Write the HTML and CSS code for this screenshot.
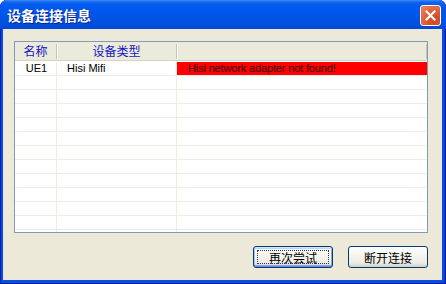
FILE: index.html
```html
<!DOCTYPE html>
<html lang="zh-CN">
<head>
  <meta charset="UTF-8" />
  <title>设备连接信息</title>
  <link rel="stylesheet" href="styles.css">
</head>
<body>
  <div class="window">
    <div class="titlebar">
      <span class="title">设备连接信息</span>
      <button class="close-btn">
        <svg width="11" height="11" viewBox="0 0 11 11">
          <path d="M1.5 1.5 L9.5 9.5 M9.5 1.5 L1.5 9.5" stroke="#fff" stroke-width="2.2" stroke-linecap="square"/>
        </svg>
      </button>
    </div>

    <div class="panel">
      <div class="listview">
        <div class="list-row list-head">
          <div class="cell c-name">名称</div>
          <div class="cell c-type">设备类型</div>
          <div class="cell c-msg"></div>
        </div>
        <div class="list-row">
          <div class="cell c-name">UE1</div>
          <div class="cell c-type">Hisi Mifi</div>
          <div class="cell c-msg error">Hisi network adapter not found!</div>
        </div>
        <div class="list-row"><div class="cell c-name"></div><div class="cell c-type"></div><div class="cell c-msg"></div></div>
        <div class="list-row"><div class="cell c-name"></div><div class="cell c-type"></div><div class="cell c-msg"></div></div>
        <div class="list-row"><div class="cell c-name"></div><div class="cell c-type"></div><div class="cell c-msg"></div></div>
        <div class="list-row"><div class="cell c-name"></div><div class="cell c-type"></div><div class="cell c-msg"></div></div>
        <div class="list-row"><div class="cell c-name"></div><div class="cell c-type"></div><div class="cell c-msg"></div></div>
        <div class="list-row"><div class="cell c-name"></div><div class="cell c-type"></div><div class="cell c-msg"></div></div>
        <div class="list-row"><div class="cell c-name"></div><div class="cell c-type"></div><div class="cell c-msg"></div></div>
        <div class="list-row"><div class="cell c-name"></div><div class="cell c-type"></div><div class="cell c-msg"></div></div>
        <div class="list-row"><div class="cell c-name"></div><div class="cell c-type"></div><div class="cell c-msg"></div></div>
        <div class="list-row"><div class="cell c-name"></div><div class="cell c-type"></div><div class="cell c-msg"></div></div>
        <div class="list-row"><div class="cell c-name"></div><div class="cell c-type"></div><div class="cell c-msg"></div></div>
        <div class="list-row"><div class="cell c-name"></div><div class="cell c-type"></div><div class="cell c-msg"></div></div>
      </div>

      <div class="actions">
        <button class="btn btn-default"><span>再次尝试</span></button>
        <button class="btn"><span>断开连接</span></button>
      </div>
    </div>
  </div>
</body>
</html>
```

FILE: styles.css
```css
body {
  margin: 0;
  width: 446px;
  height: 284px;
  overflow: hidden;
  background: #ffffff;
  font-family: "Liberation Sans", "Noto Sans CJK SC", sans-serif;
}

.window {
  width: 446px;
  height: 284px;
  box-sizing: border-box;
  display: flex;
  flex-direction: column;
  border-radius: 7px 7px 0 0;
  background: linear-gradient(90deg, #0a3fd6 0, #0a4ee0 3px, #0a4ee0 calc(100% - 4px), #0a3ad0 100%);
  box-shadow: inset 1px 0 #0021b0, inset -1px 0 #001c9c, inset 0 -1px #001c9c;
  overflow: hidden;
}

.titlebar {
  height: 29px;
  flex: none;
  display: flex;
  align-items: center;
  justify-content: space-between;
  padding: 0 5px 0 7px;
  border-radius: 7px 7px 0 0;
  background: linear-gradient(#3a8cf8 0, #1466ee 2px, #0a5cf0 4px, #0058ee 8px, #0055e8 16px, #0050de 24px, #0047d4 29px);
}

.title {
  color: #ffffff;
  font-family: "Noto Sans CJK SC", sans-serif;
  font-size: 14px;
  font-weight: bold;
  text-shadow: 1px 1px #0a1e8c;
  margin-top: 1px;
}

.close-btn {
  width: 21px;
  height: 21px;
  margin-top: 2px;
  padding: 0;
  display: flex;
  align-items: center;
  justify-content: center;
  border: 1px solid #ffffff;
  border-radius: 3px;
  background: radial-gradient(circle at 70% 75%, #cc4422 0, #e25a32 45%, #f08a68 100%);
  box-shadow: inset 0 0 1px #a33010;
}

.panel {
  flex: 1;
  margin: 0 4px 4px 3px;
  background: #ece9d8;
  padding: 12px 14px 12px 11px;
  display: flex;
  flex-direction: column;
}

.listview {
  height: 192px;
  box-sizing: border-box;
  border: 1px solid #7f9db9;
  background: #ffffff;
  overflow: hidden;
}

.list-row {
  display: flex;
  height: 14px;
  box-sizing: border-box;
  border-bottom: 1px solid #efede3;
}

.list-head {
  height: 20px;
  background: #ebeadb;
  border-bottom: none;
  box-shadow: inset 0 -1px #ffffff, inset 0 -2px #d6d3c4;
}

.cell {
  box-sizing: border-box;
  border-right: 1px solid #efede3;
  font-size: 11px;
  line-height: 13px;
  color: #000000;
  white-space: nowrap;
}

.c-name {
  width: 42px;
  text-align: center;
  padding-left: 2px;
}

.c-type {
  width: 120px;
  padding-left: 10px;
}

.c-msg {
  flex: 1;
  border-right: none;
  padding-left: 11px;
}

.list-head .cell {
  font-family: "Noto Sans CJK SC", sans-serif;
  font-size: 12px;
  color: #1414c8;
  text-align: center;
  padding-left: 0;
  border-right: 1px solid #c7c5b2;
  box-shadow: 1px 0 #ffffff;
  height: 15px;
  margin-top: 2px;
  line-height: 14px;
}

.list-head .c-msg {
  flex: none;
  width: 250px;
}

.error {
  background: #ff0000;
  color: #300000;
  letter-spacing: -0.15px;
}

.actions {
  display: flex;
  justify-content: flex-end;
  gap: 15px;
  margin-top: 13px;
}

.btn {
  width: 80px;
  height: 22px;
  padding: 0;
  border: 1px solid #003c74;
  border-radius: 3px;
  background: linear-gradient(#ffffff 0, #f6f5f0 40%, #ecebe4 80%, #d6d0c5 100%);
  font-family: "Noto Sans CJK SC", sans-serif;
  font-size: 12px;
  color: #000000;
  display: flex;
  align-items: center;
  justify-content: center;
}

.btn-default {
  box-shadow: inset 0 1px #cee7ff, inset 0 -1px #6982ee, inset 1px 0 #a9c6f4, inset -1px 0 #89a8ee, inset 0 2px #bcd4f6, inset 0 -2px #8aa5ea;
  position: relative;
}

.btn-default::after {
  content: "";
  position: absolute;
  inset: 3px;
  border: 1px dotted #333333;
}
```
